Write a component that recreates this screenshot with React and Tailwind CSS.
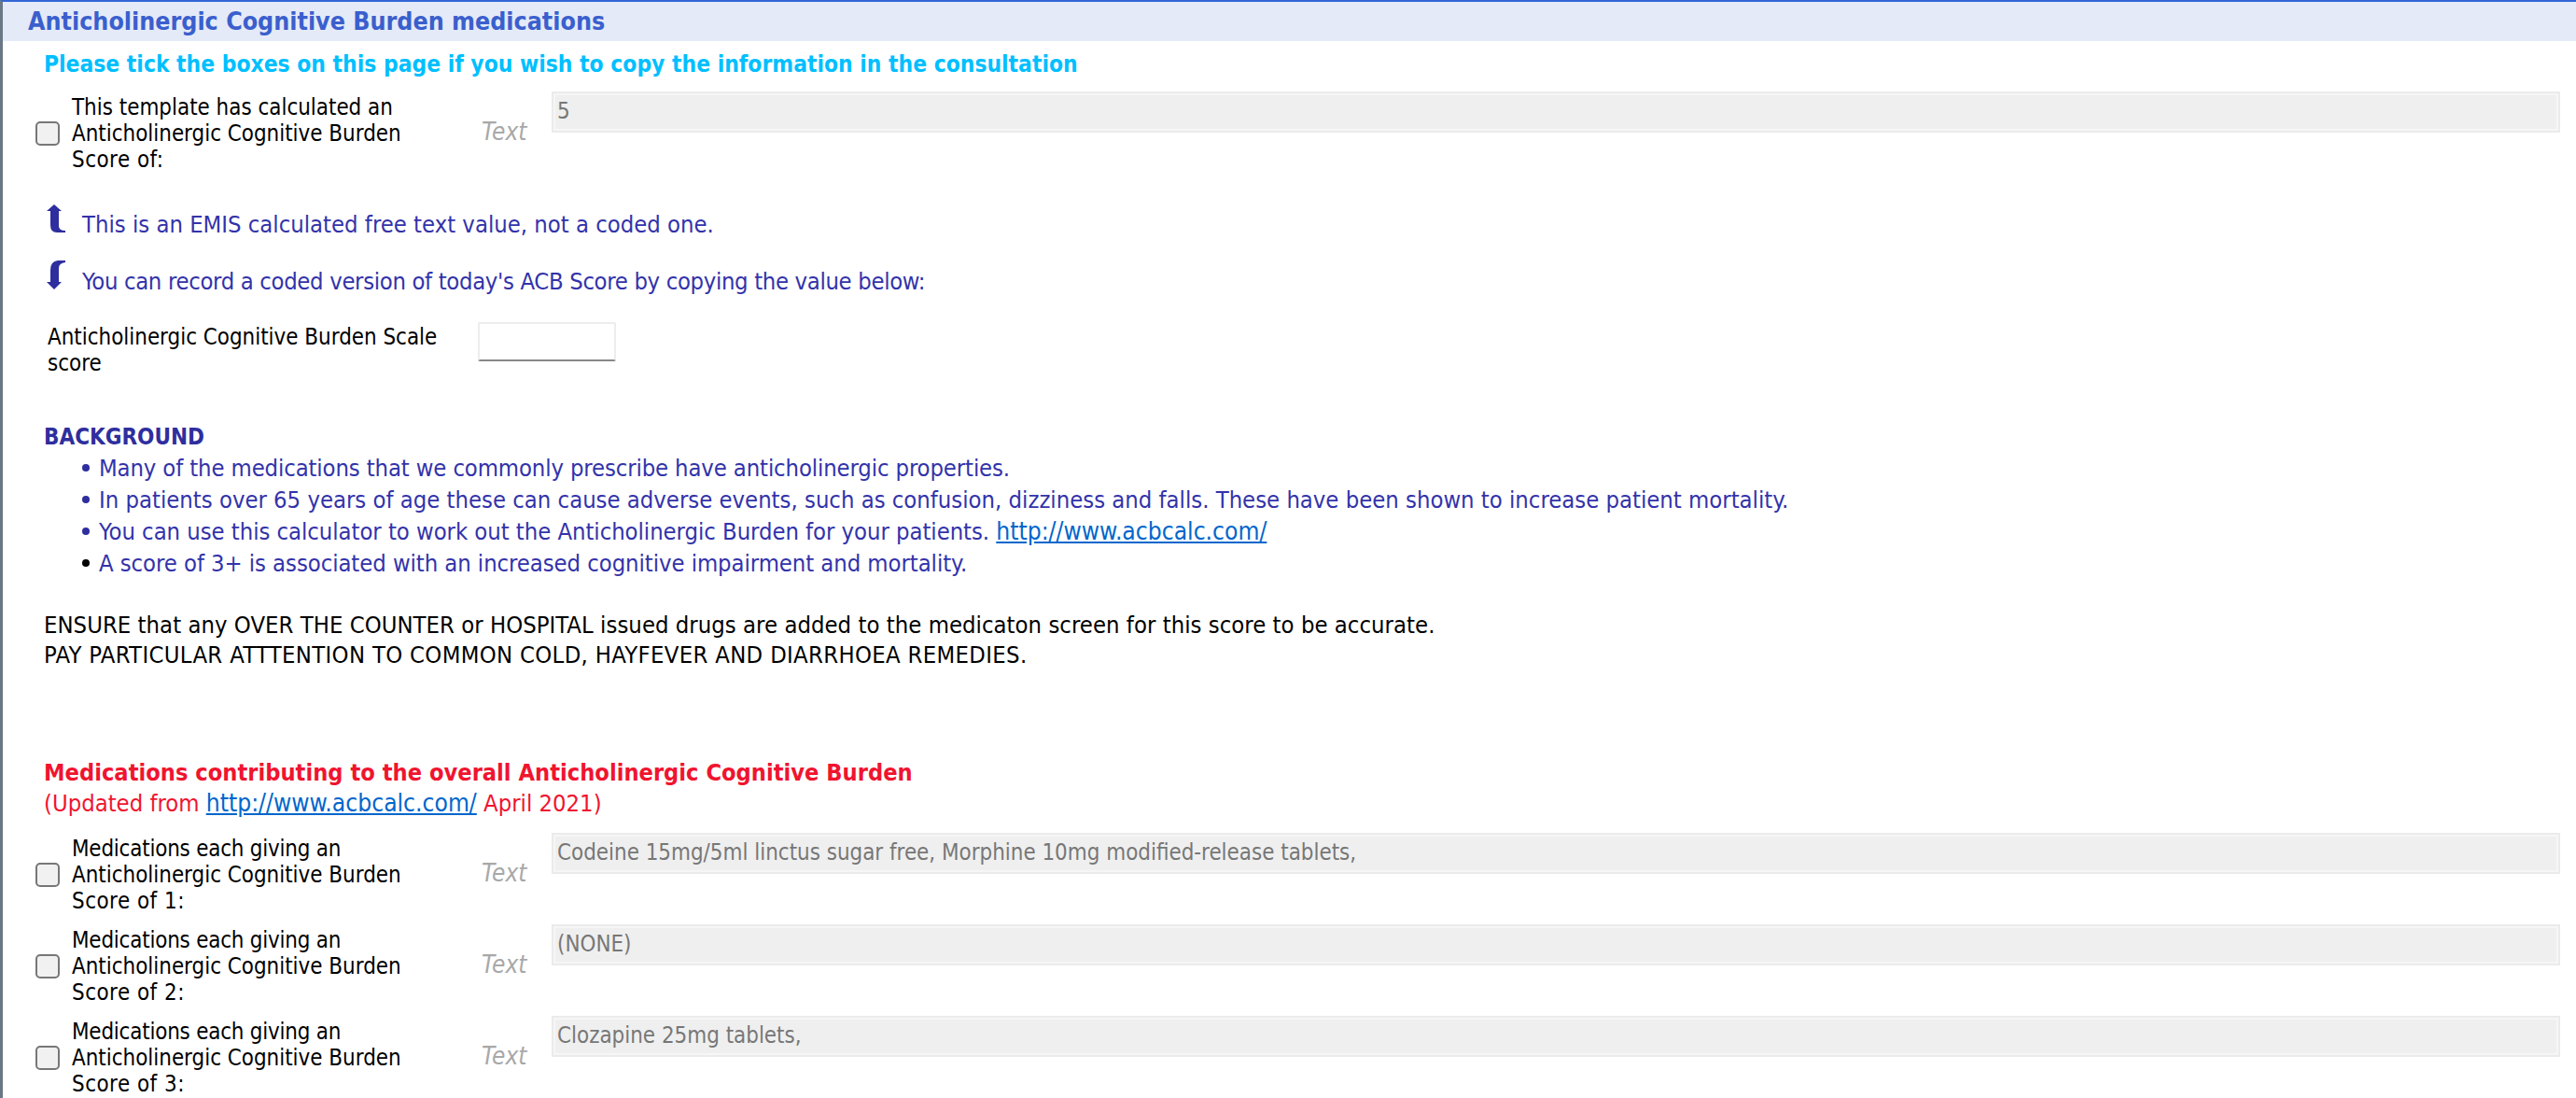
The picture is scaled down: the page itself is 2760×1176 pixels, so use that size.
const bodyFont = { fontFamily: '"DejaVu Sans Condensed", "DejaVu Sans", sans-serif' };

function UpArrow() {
  return (
    <svg width="20" height="31" viewBox="0 0 20 31" className="mb-[4px] block">
      <path d="M8 0 L16 7 L13 7 L13 23 Q13 28 20 28 L20 30 L11 30 Q4 30 4 22 L4 7 L0 7 Z" fill="#2e2e9e" />
    </svg>
  );
}

function DownArrow() {
  return (
    <svg width="20" height="31" viewBox="0 0 20 31" className="mb-[5px] block">
      <path d="M20 0 L20 2 Q13 3 13 8 L13 23 L16 23 L8 31 L0 23 L4 23 L4 10 Q4 1 12 0 Z" fill="#2e2e9e" />
    </svg>
  );
}

function TextRow({ first, last, value }) {
  return (
    <div className="flex h-[98px] items-center text-[23.9px]">
      <input type="checkbox" className="ml-[35px] h-[26px] w-[26px] shrink-0 appearance-none rounded-[5px] border-2 border-[#777777] bg-[#f1f1f1]" />
      <div className="ml-[13px] w-[390px] shrink-0 text-black">
        <div className={first === 'Medications each giving an' ? 'tracking-[-0.2px]' : ''}>{first}</div>
        <div>Anticholinergic Cognitive Burden</div>
        <div className="tracking-[0.5px]">{last}</div>
      </div>
      <div className="mb-[4px] ml-[49px] w-[75px] shrink-0 text-[26px] italic text-[#a8a8a8]">Text</div>
      <div className="mt-[4px] flex h-[44px] flex-1 items-center self-start border-2 border-[#ebebeb] bg-[#efefef] pb-[2px] pl-[4px] text-[#777777] shadow-[inset_0_0_0_2px_#f6f6f6]">
        {value}
      </div>
    </div>
  );
}

function Bullet({ dot = 'bg-[#2e2e9e]', className = '', children }) {
  return (
    <li className="flex h-[34px] items-center">
      <span className={`mr-[10px] h-[8px] w-[8px] rounded-full ${dot}`}></span>
      <span className={className}>{children}</span>
    </li>
  );
}

function AcbLink() {
  return <a href="#" className="text-[26.2px] tracking-normal text-[#0066cc] underline">http://www.acbcalc.com/</a>;
}

export default function App() {
  return (
    <div className="h-[1176px] w-[2760px] overflow-hidden border-l-[3px] border-t-2 border-l-[#6b7785] border-t-[#3366d6] bg-white text-[25.4px] leading-[28px]" style={bodyFont}>
      <div className="flex h-[42px] items-center bg-[#e4eaf8] pl-[27px] text-[26.6px] font-bold text-[#3a5fcd]">
        Anticholinergic Cognitive Burden medications
      </div>

      <div className="flex h-[46px] items-center pl-[44px] pt-[3px] text-[24.4px] font-bold text-[#00bfff]">
        Please tick the boxes on this page if you wish to copy the information in the consultation
      </div>

      <div className="pr-[17px] pt-[4px]">
        <TextRow first="This template has calculated an" last="Score of:" value="5" />
      </div>

      <div className="mt-[30px] flex h-[32px] items-end pl-[47px] text-[#3333aa]">
        <UpArrow />
        <span className="ml-[18px]">This is an EMIS calculated free text value, not a coded one.</span>
      </div>
      <div className="mt-[29px] flex h-[32px] items-end pl-[47px] text-[#3333aa]">
        <DownArrow />
        <span className="ml-[18px] tracking-[-0.33px]">You can record a coded version of today's ACB Score by copying the value below:</span>
      </div>

      <div className="mt-[32px] flex pl-[48px] text-[23.9px]">
        <div className="w-[461px] text-black">Anticholinergic Cognitive Burden Scale<br />score</div>
        <div className="-mt-[2px] h-[42px] w-[148px] rounded-[2px] border-2 border-[#ededed] border-b-[#888888] bg-white"></div>
      </div>

      <div className="mt-[51px] pl-[44px] text-[24px] font-bold text-[#2e2e9e]">BACKGROUND</div>
      <ul className="mt-[2px] pl-[85px] text-[#3333aa]">
        <Bullet className="tracking-[-0.12px]">Many of the medications that we commonly prescribe have anticholinergic properties.</Bullet>
        <Bullet>In patients over 65 years of age these can cause adverse events, such as confusion, dizziness and falls. These have been shown to increase patient mortality.</Bullet>
        <Bullet className="tracking-[-0.04px]">You can use this calculator to work out the Anticholinergic Burden for your patients. <AcbLink /></Bullet>
        <Bullet dot="bg-black" className="tracking-[-0.06px]">A score of 3+ is associated with an increased cognitive impairment and mortality.</Bullet>
      </ul>

      <div className="mt-[33px] pl-[44px] leading-[32px] text-black">
        <div className="tracking-[0.04px]">ENSURE that any OVER THE COUNTER or HOSPITAL issued drugs are added to the medicaton screen for this score to be accurate.</div>
        <div className="tracking-[0.33px]">PAY PARTICULAR ATTTENTION TO COMMON COLD, HAYFEVER AND DIARRHOEA REMEDIES.</div>
      </div>

      <div className="mt-[95px] pl-[44px] leading-[32px] text-[#f0142f]">
        <div className="text-[25.2px] font-bold">Medications contributing to the overall Anticholinergic Cognitive Burden</div>
        <div>(Updated from <AcbLink /> April 2021)</div>
      </div>

      <div className="pr-[17px] pt-[12px]">
        <TextRow first="Medications each giving an" last="Score of 1:" value="Codeine 15mg/5ml linctus sugar free, Morphine 10mg modified-release tablets," />
        <TextRow first="Medications each giving an" last="Score of 2:" value="(NONE)" />
        <TextRow first="Medications each giving an" last="Score of 3:" value="Clozapine 25mg tablets," />
      </div>
    </div>
  );
}
